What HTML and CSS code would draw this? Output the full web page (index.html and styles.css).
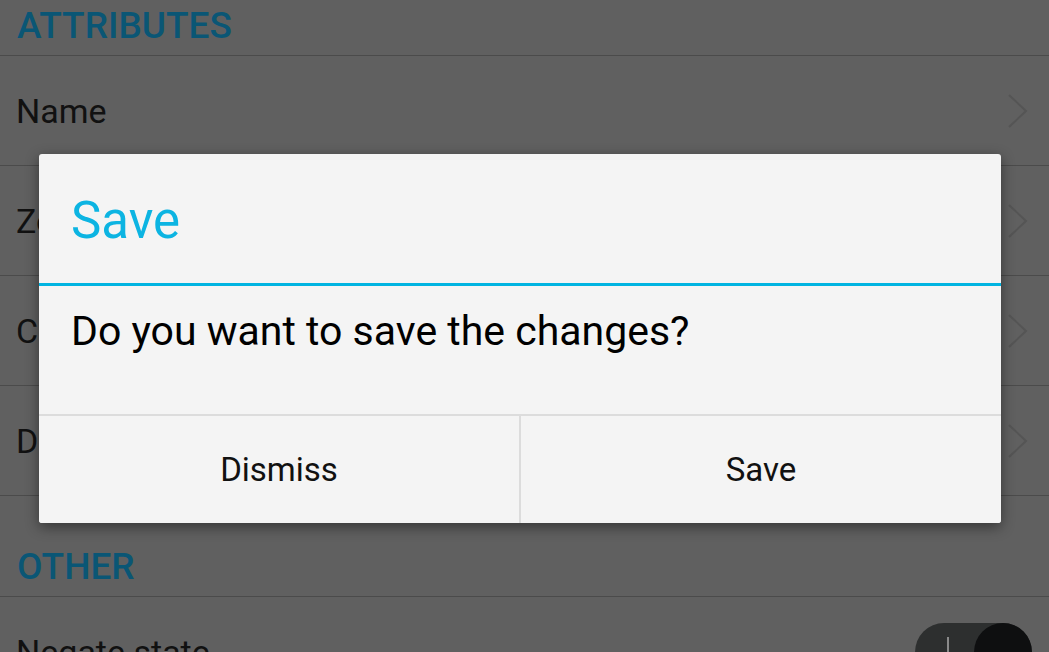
FILE: index.html
```html
<!DOCTYPE html>
<html lang="en">
<head>
  <meta charset="UTF-8" />
  <meta name="viewport" content="width=device-width, initial-scale=1.0"/>
  <title>Settings</title>
  <link rel="stylesheet" href="styles.css">
</head>
<body>
  <div class="screen">
    <div class="list">
      <div class="section-header">ATTRIBUTES</div>
      <div class="row">
        <span class="row-label">Name</span>
        <svg class="chevron" width="20" height="34" viewBox="0 0 20 34"><path d="M1 1 L18 17 L1 33" fill="none" stroke="#555" stroke-width="2"/></svg>
      </div>
      <div class="row">
        <span class="row-label">Zone</span>
        <svg class="chevron" width="20" height="34" viewBox="0 0 20 34"><path d="M1 1 L18 17 L1 33" fill="none" stroke="#555" stroke-width="2"/></svg>
      </div>
      <div class="row">
        <span class="row-label">Condition</span>
        <svg class="chevron" width="20" height="34" viewBox="0 0 20 34"><path d="M1 1 L18 17 L1 33" fill="none" stroke="#555" stroke-width="2"/></svg>
      </div>
      <div class="row">
        <span class="row-label">Delay</span>
        <svg class="chevron" width="20" height="34" viewBox="0 0 20 34"><path d="M1 1 L18 17 L1 33" fill="none" stroke="#555" stroke-width="2"/></svg>
      </div>
      <div class="section-header">OTHER</div>
      <div class="row">
        <span class="row-label">Negate state</span>
        <div class="switch">
          <span class="switch-mark"></span>
          <span class="switch-knob"></span>
        </div>
      </div>
    </div>

    <div class="dialog">
      <div class="dialog-title">Save</div>
      <div class="dialog-message">Do you want to save the changes?</div>
      <div class="dialog-buttons">
        <button type="button">Dismiss</button>
        <button type="button">Save</button>
      </div>
    </div>
  </div>
</body>
</html>
```

FILE: styles.css
```css
body {
  margin: 0;
  font-family: Roboto, "Noto Sans", sans-serif;
  background: #606060;
  overflow: hidden;
}

.screen {
  position: relative;
  width: 1049px;
  height: 652px;
  overflow: hidden;
}

.list {
  margin-top: -45px;
}

.section-header {
  height: 101px;
  box-sizing: border-box;
  padding: 0 17px 8px;
  display: flex;
  align-items: flex-end;
  font-size: 37px;
  font-weight: 500;
  color: #0a5675;
  border-bottom: 1px solid #4b4b4b;
}

.row {
  height: 109px;
  padding: 0 21px 0 16px;
  display: flex;
  align-items: center;
  justify-content: space-between;
  border-bottom: 1px solid #4b4b4b;
}

.row-label {
  font-size: 34px;
  color: #111;
}

.chevron {
  display: block;
}

.switch {
  position: relative;
  width: 117px;
  height: 58px;
  margin-right: -4px;
  margin-top: 1px;
  border-radius: 29px;
  background: #2d2f2f;
}

.switch-mark {
  position: absolute;
  left: 32px;
  top: 14px;
  width: 2px;
  height: 30px;
  background: #8a8a8a;
}

.switch-knob {
  position: absolute;
  right: 0;
  top: 0;
  width: 58px;
  height: 58px;
  border-radius: 50%;
  background: #0e0f10;
}

.dialog {
  position: absolute;
  left: 39px;
  top: 154px;
  width: 962px;
  background: #f4f4f4;
  border-radius: 3px;
  box-shadow: 0 4px 14px rgba(0,0,0,0.45);
  overflow: hidden;
}

.dialog-title {
  height: 132px;
  box-sizing: border-box;
  padding: 3px 0 0 32px;
  display: flex;
  align-items: center;
  font-size: 51px;
  color: #0cb4e2;
  border-bottom: 3px solid #00b4e1;
}

.dialog-message {
  height: 128px;
  box-sizing: border-box;
  padding: 21px 33px 0 32px;
  font-size: 41px;
  color: #000;
}

.dialog-buttons {
  display: flex;
  border-top: 2px solid #dcdcdc;
}

.dialog-buttons button {
  flex: 1;
  height: 107px;
  border: none;
  background: #f4f4f4;
  font-family: inherit;
  font-size: 33px;
  color: #111;
}

.dialog-buttons button + button {
  border-left: 2px solid #dcdcdc;
}
```
